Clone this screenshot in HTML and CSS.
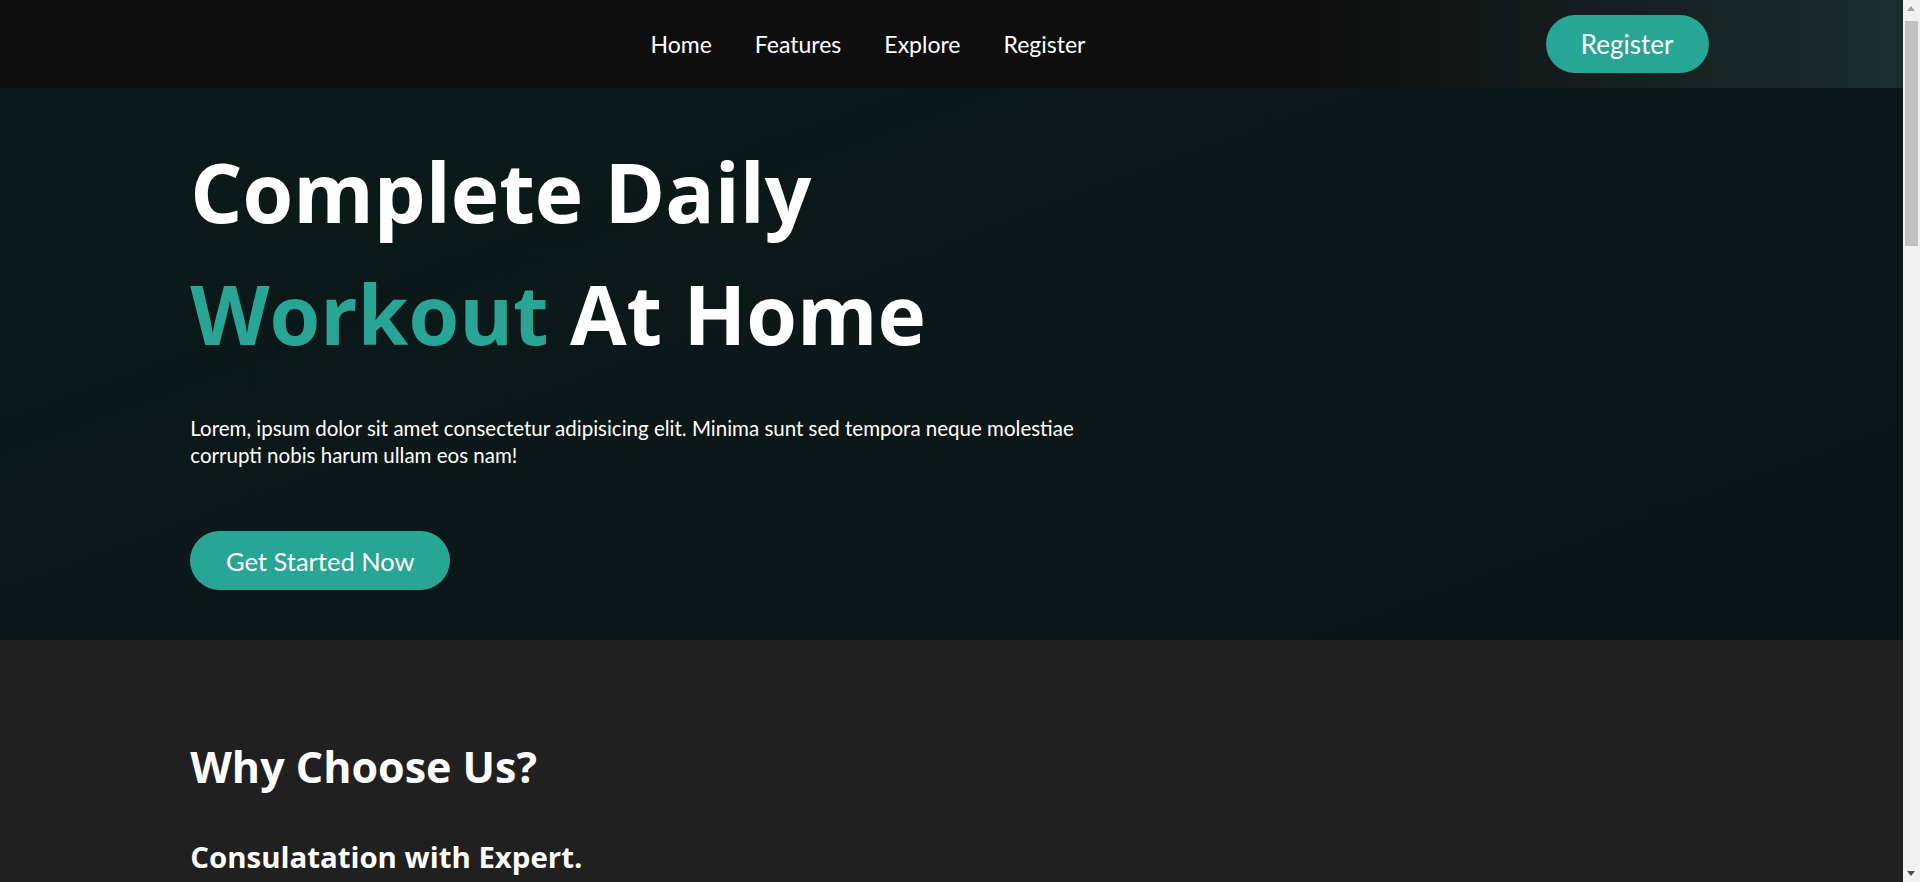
FILE: index.html
```html
<!DOCTYPE html>
<html lang="en">
<head>
<meta charset="utf-8">
<title>Daily Workout</title>
<link rel="stylesheet" href="styles.css">
</head>
<body>
<div class="page">
  <header class="nav">
    <div class="container nav-inner">
      <div class="logo"></div>
      <ul class="links">
        <li><a href="#">Home</a></li>
        <li><a href="#">Features</a></li>
        <li><a href="#">Explore</a></li>
        <li><a href="#">Register</a></li>
      </ul>
      <a class="btn btn-nav" href="#">Register</a>
    </div>
  </header>
  <section class="hero">
    <div class="container">
      <h1 class="hero-title">Complete Daily<br><span class="accent">Workout</span> At Home</h1>
      <p class="hero-text">Lorem, ipsum dolor sit amet consectetur adipisicing elit. Minima sunt sed tempora neque molestiae corrupti nobis harum ullam eos nam!</p>
      <a class="btn btn-hero" href="#">Get Started Now</a>
    </div>
  </section>
  <section class="why">
    <div class="container">
      <h2 class="why-title">Why Choose Us?</h2>
      <div class="feature">
        <h3 class="feature-title">Consulatation with Expert.</h3>
        <p class="feature-text">Lorem ipsum dolor sit amet consectetur adipisicing elit. Quibusdam, voluptatum. Eveniet, dolorum nesciunt! Quae, officiis.</p>
      </div>
      <div class="feature">
        <h3 class="feature-title">Personalized Plans.</h3>
        <p class="feature-text">Lorem ipsum dolor sit amet consectetur adipisicing elit. Quibusdam, voluptatum. Eveniet, dolorum nesciunt! Quae, officiis.</p>
      </div>
      <div class="feature">
        <h3 class="feature-title">Track Your Progress.</h3>
        <p class="feature-text">Lorem ipsum dolor sit amet consectetur adipisicing elit. Quibusdam, voluptatum. Eveniet, dolorum nesciunt! Quae, officiis.</p>
      </div>
    </div>
  </section>
  <section class="explore">
    <div class="container">
      <h2 class="why-title">Explore Workouts</h2>
      <p class="feature-text">Lorem ipsum dolor sit amet consectetur adipisicing elit. Quibusdam, voluptatum. Eveniet, dolorum nesciunt! Quae, officiis.</p>
    </div>
  </section>
  <footer class="footer">
    <div class="container">
      <p class="feature-text">© Daily Workout. All rights reserved.</p>
    </div>
  </footer>
</div>
<div class="scrollbar" aria-hidden="true">
  <span class="sb-up"></span>
  <span class="sb-thumb"></span>
  <span class="sb-down"></span>
</div>
</body>
</html>
```

FILE: styles.css
```css
* { box-sizing: border-box; }
html, body { margin: 0; padding: 0; }
body {
  font-family: "Lato", "Noto Sans", sans-serif;
  color: #ffffff;
  background: #1f201f;
}
a { color: inherit; text-decoration: none; }
.page {
  width: calc(100% - 17px);
}
.container {
  width: 80%;
  margin: 0 auto;
}
.nav {
  height: 88px;
  background: linear-gradient(to right, #0f0f0f 0%, #0f0f0f 69%, #1b2f2c 100%);
}
.nav-inner {
  height: 100%;
  display: flex;
  align-items: center;
  justify-content: space-between;
}
.links {
  display: flex;
  gap: 43px;
  list-style: none;
  margin: 0;
  padding: 0;
}
.links a {
  font-size: 23px;
}
.btn {
  display: inline-flex;
  align-items: center;
  justify-content: center;
  background: #29a596;
  color: #ffffff;
  border-radius: 30px;
}
.btn-nav {
  width: 163px;
  height: 58px;
  margin-right: 4px;
  font-size: 26px;
}
.hero {
  height: 552px;
  background: linear-gradient(160deg, #0b1a1a 0%, #0c1718 55%, #0c1516 100%);
  padding-top: 42px;
}
.hero-title {
  margin: 0;
  font-family: "Open Sans", "Lato", sans-serif;
  font-size: 82px;
  line-height: 122px;
  font-weight: 700;
}
.accent { color: #29a596; }
.hero-text {
  margin: 41px 0 0;
  max-width: 900px;
  font-size: 20.5px;
  line-height: 27px;
}
.btn-hero {
  margin-top: 62px;
  width: 260px;
  height: 59px;
  font-size: 25.5px;
}
.why {
  padding-top: 99px;
}
.why-title {
  margin: 0;
  font-family: "Open Sans", "Lato", sans-serif;
  font-size: 43px;
  line-height: 56px;
  font-weight: 700;
}
.feature { margin-top: 42px; }
.feature-title {
  margin: 0;
  font-family: "Open Sans", "Lato", sans-serif;
  font-size: 29.4px;
  line-height: 40px;
  font-weight: 700;
}
.feature-text {
  margin: 16px 0 0;
  font-size: 20.5px;
  line-height: 27px;
  max-width: 900px;
}
.feature + .feature { margin-top: 300px; }
.explore { padding: 400px 0 600px; }
.footer { padding: 200px 0 100px; }

.scrollbar {
  position: fixed;
  top: 0;
  right: 0;
  width: 17px;
  height: 100vh;
  background: #f1f1f1;
}
.sb-up {
  position: absolute;
  top: 6px;
  left: 4px;
  width: 0;
  height: 0;
  border-left: 4.5px solid transparent;
  border-right: 4.5px solid transparent;
  border-bottom: 5px solid #a3a3a3;
}
.sb-thumb {
  position: absolute;
  top: 21px;
  left: 2px;
  width: 13px;
  height: 225px;
  background: #c1c1c1;
}
.sb-down {
  position: absolute;
  bottom: 6px;
  left: 4px;
  width: 0;
  height: 0;
  border-left: 4.5px solid transparent;
  border-right: 4.5px solid transparent;
  border-top: 5px solid #505050;
}
```
